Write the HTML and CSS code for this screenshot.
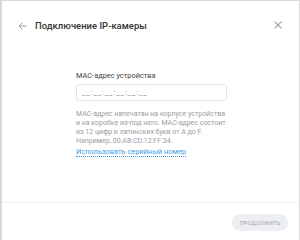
FILE: index.html
```html
<!DOCTYPE html>
<html lang="ru">
<head>
<meta charset="utf-8">
<link rel="stylesheet" href="styles.css">
</head>
<body>
<div class="dialog">
  <div class="header">
    <svg class="back" width="9" height="8" viewBox="0 0 9 8"><path d="M8.5 4H1M4.3 0.7L1 4l3.3 3.3" fill="none" stroke="#9a9ca4" stroke-width="1"/></svg>
    <div class="title">Подключение IP-камеры</div>
    <svg class="close" width="8" height="8" viewBox="0 0 8 8"><path d="M0.6 0.6l6.8 6.8M7.4 0.6L0.6 7.4" stroke="#9a9ca4" stroke-width="1.1"/></svg>
  </div>
  <div class="body">
    <div class="form">
      <div class="label">МАС-адрес устройства</div>
      <div class="input">__:__:__:__:__:__</div>
      <div class="help">МАС-адрес напечатан на корпусе устройства<br>и на коробке из-под него. МАС-адрес состоит<br>из 12 цифр и латинских букв от A до F.<br>Например, 00:AB:CD:12:FF:34.</div>
      <div class="linkrow"><a class="link">Использовать серийный номер</a></div>
    </div>
  </div>
  <div class="footer">
    <button class="btn">ПРОДОЛЖИТЬ</button>
  </div>
</div>
</body>
</html>
```
FILE: styles.css
```css
html, body { margin: 0; padding: 0; }
body {
  background: #d8d8e0;
  width: 300px;
  height: 240px;
  overflow: hidden;
  font-family: Roboto, "Noto Sans", sans-serif;
}
.dialog {
  margin: 1px 1px 0 2px;
  background: #fff;
  height: 239px;
  display: flex;
  flex-direction: column;
}
.header {
  height: 46px;
  display: flex;
  align-items: center;
  padding: 2px 17px 0 16px;
  box-sizing: border-box;
}
.back { margin-right: 8px; margin-top: 1px; }
.title {
  flex: 1;
  font-size: 9.4px;
  color: #333;
  font-weight: 500;
  letter-spacing: 0.05px;
}
.close { margin-top: 0; }
.body {
  flex: 1;
  display: flex;
  justify-content: center;
}
.form {
  width: 151px;
  padding-top: 24px;
  margin-left: 2px;
}
.label {
  font-size: 7.4px;
  color: #444;
  line-height: 10px;
}
.input {
  margin-top: 3px;
  height: 17px;
  border: 1px solid #e3e4e8;
  border-radius: 3px;
  box-sizing: border-box;
  padding: 0 5px;
  font-size: 7.6px;
  line-height: 15px;
  color: #8a8c94;
  letter-spacing: 0.9px;
}
.help {
  margin-top: 9px;
  font-size: 7px;
  line-height: 9px;
  color: #9a9ca3;
  white-space: nowrap;
}
.linkrow {
  margin-top: 1px;
  display: flex;
}
.link {
  font-size: 7.4px;
  color: #3b9ee6;
  border-bottom: 1px dotted #3b9ee6;
  line-height: 9px;
}
.footer {
  height: 38px;
  border-top: 1px solid #efeff2;
  display: flex;
  justify-content: flex-end;
  align-items: flex-start;
  padding: 11px 11px 0 0;
  box-sizing: border-box;
}
.btn {
  width: 56px;
  height: 17px;
  border: none;
  border-radius: 9px;
  background: #eceef2;
  color: #a3a6ae;
  font-family: Roboto, sans-serif;
  font-size: 5.6px;
  letter-spacing: 0.1px;
  padding: 0;
}
```
